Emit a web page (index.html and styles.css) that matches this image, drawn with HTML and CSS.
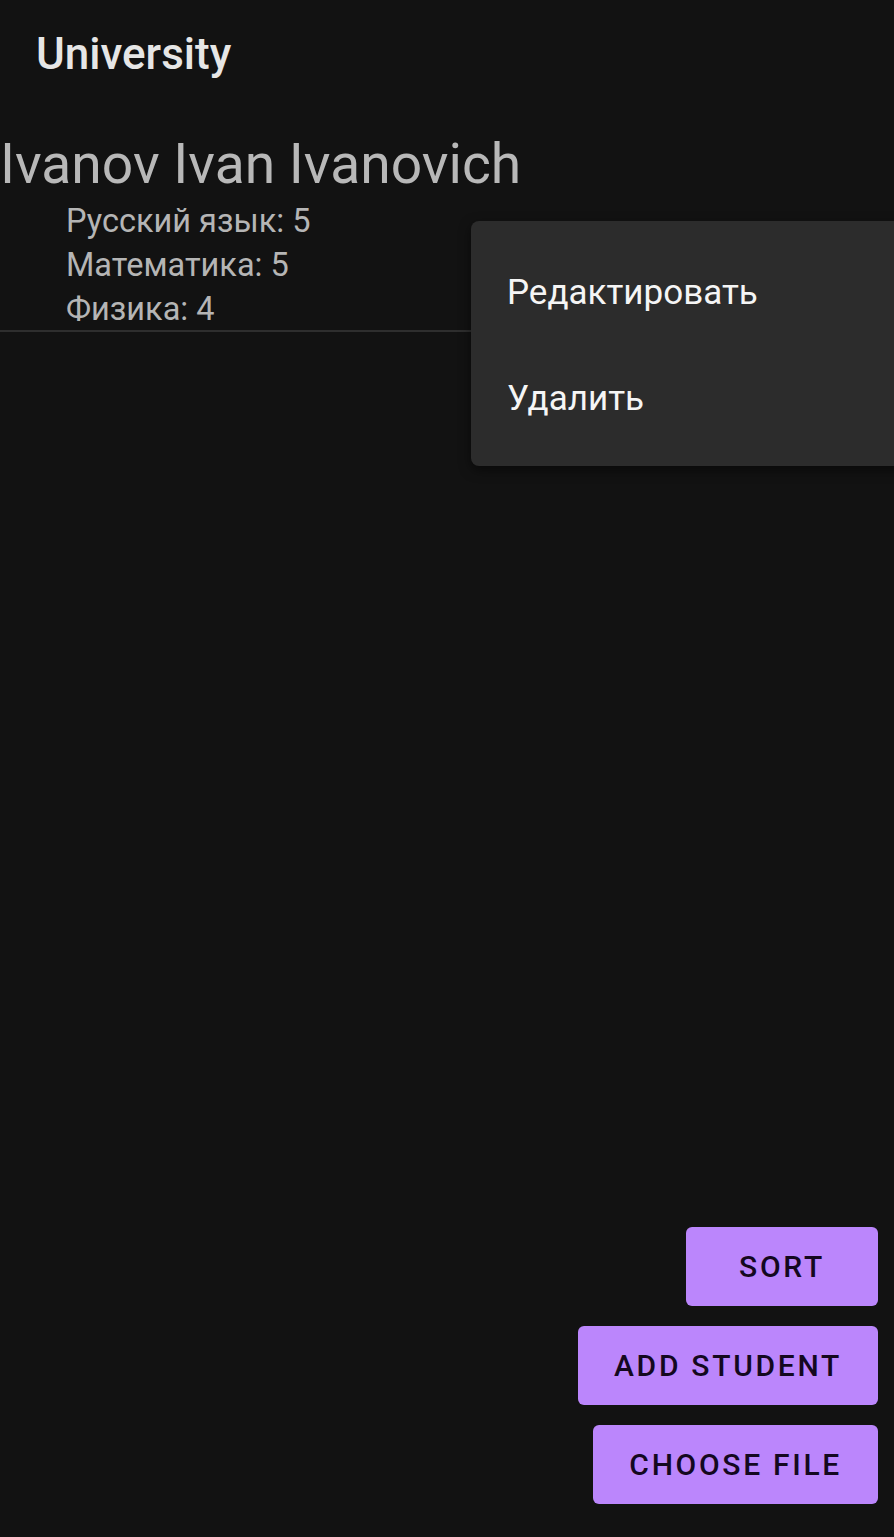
FILE: index.html
```html
<!DOCTYPE html>
<html>
<head>
<meta charset="utf-8">
<link rel="stylesheet" href="styles.css">
</head>
<body>
<div class="screen">
  <header class="appbar">University</header>
  <div class="item">
    <div class="name">Ivanov Ivan Ivanovich</div>
    <div class="grades">
      <div class="grade">Русский язык: 5</div>
      <div class="grade">Математика: 5</div>
      <div class="grade">Физика: 4</div>
    </div>
  </div>
  <div class="spacer"></div>
  <div class="actions">
    <button class="btn">SORT</button>
    <button class="btn">ADD STUDENT</button>
    <button class="btn">CHOOSE FILE</button>
  </div>
  <div class="menu">
    <div class="menu-item">Редактировать</div>
    <div class="menu-item">Удалить</div>
  </div>
</div>
</body>
</html>
```
FILE: styles.css
```css
html, body {
  margin: 0;
  padding: 0;
  background: #121212;
}
body {
  font-family: Roboto, "Noto Sans", sans-serif;
}
.screen {
  position: relative;
  width: 894px;
  height: 1537px;
  display: flex;
  flex-direction: column;
  overflow: hidden;
}
.appbar {
  color: #e6e6e6;
  font-weight: 500;
  font-size: 44px;
  padding: 28px 0 0 36px;
  height: 132px;
  box-sizing: border-box;
  line-height: 52px;
}
.item {
  border-bottom: 2px solid #2e2e2e;
  padding-bottom: 0;
  margin-bottom: 0;
}
.name {
  color: #b8b8b8;
  font-size: 55.2px;
  line-height: 64px;
}
.grades {
  padding-left: 66px;
  margin-top: 3px;
  margin-bottom: -1px;
}
.grade {
  color: #b5b5b5;
  font-size: 32.5px;
  line-height: 44px;
}
.spacer {
  flex: 1;
}
.actions {
  display: flex;
  flex-direction: column;
  align-items: flex-end;
  gap: 20px;
  padding: 0 16px 33px 0;
}
.btn {
  background: #bb86fc;
  color: #14081f;
  border: none;
  border-radius: 6px;
  height: 79px;
  min-width: 192px;
  padding: 0 36px;
  font-family: Roboto, sans-serif;
  font-weight: 500;
  font-size: 30px;
  letter-spacing: 2.7px;
}
.menu {
  position: absolute;
  left: 471px;
  top: 221px;
  width: 440px;
  height: 245px;
  background: #2c2c2c;
  border-radius: 8px;
  padding-top: 19px;
  box-sizing: border-box;
  box-shadow: 0 4px 12px rgba(0,0,0,0.5);
}
.menu-item {
  color: #f5f5f5;
  font-size: 35px;
  height: 106px;
  line-height: 106px;
  padding-left: 36px;
}
```
